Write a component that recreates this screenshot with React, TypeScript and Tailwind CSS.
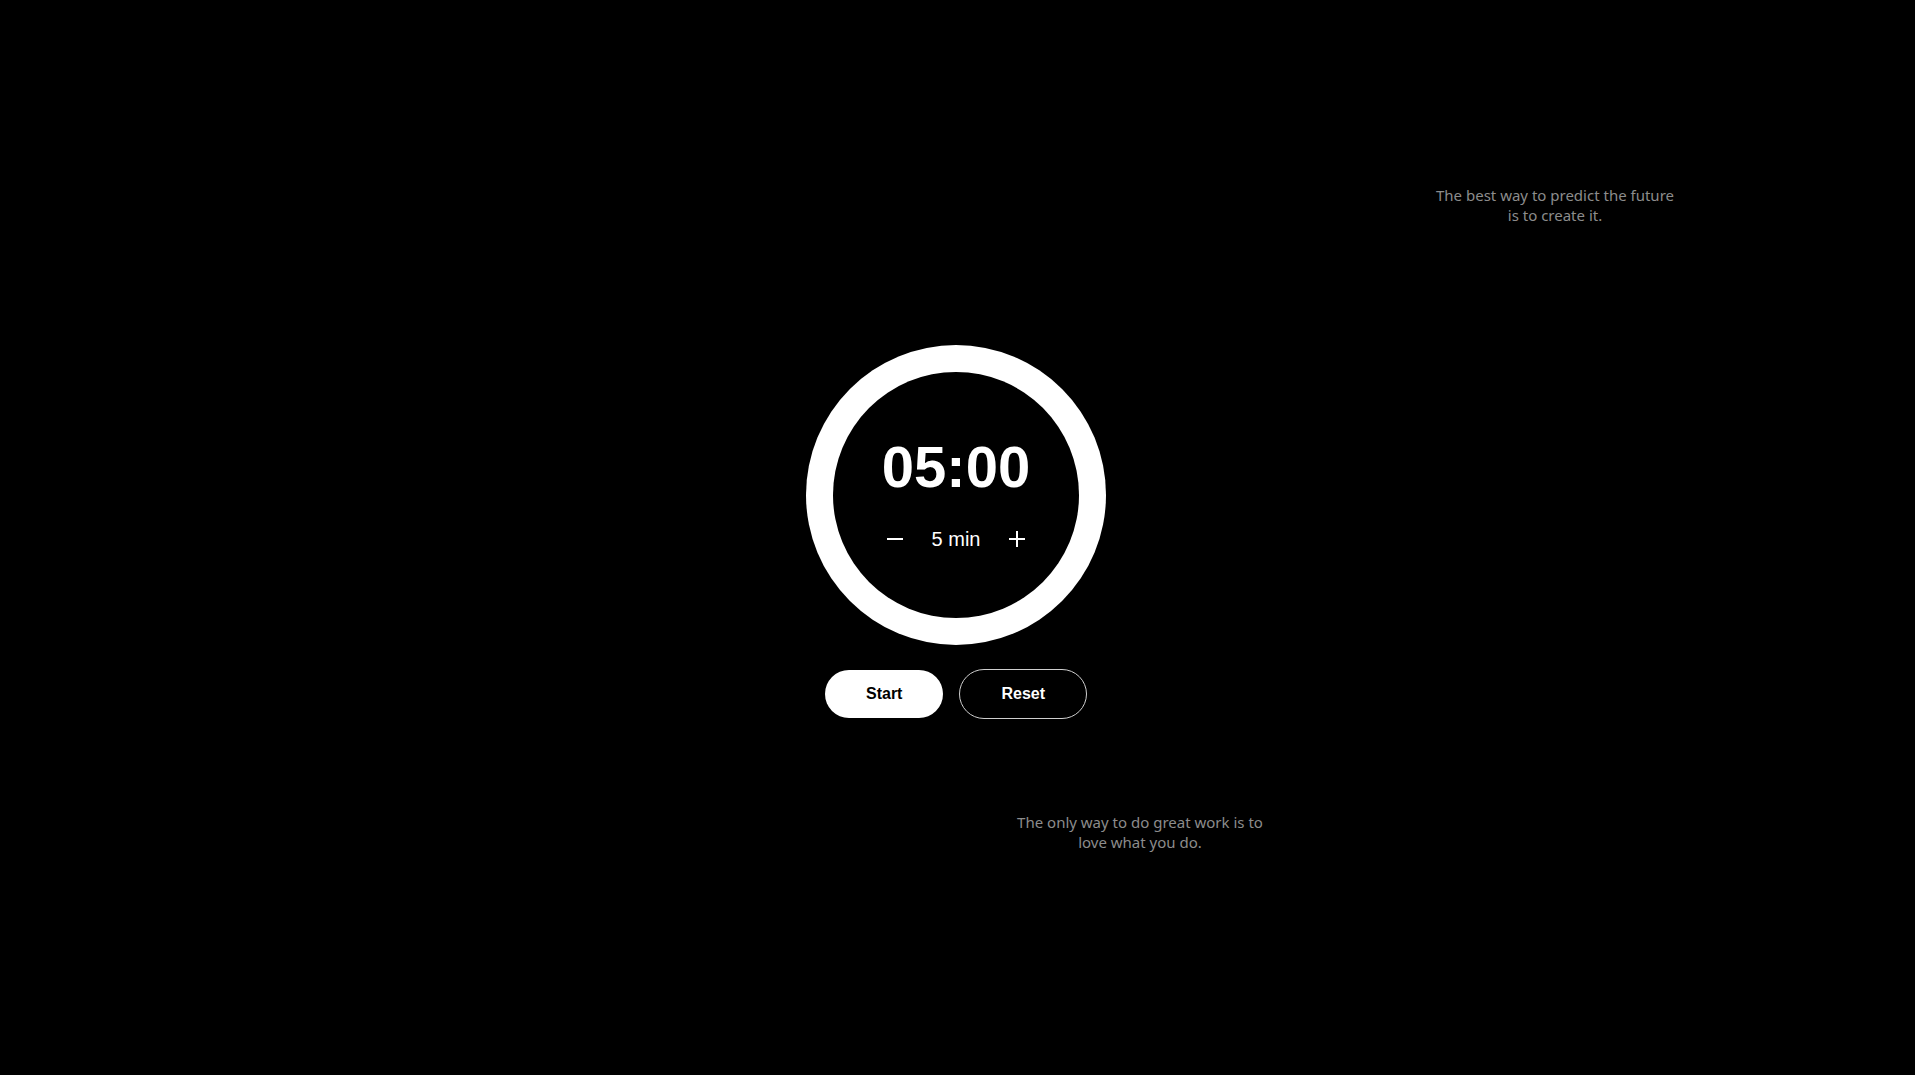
import React from "react";

function MinusIcon() {
  return (
    <svg width="24" height="24" viewBox="0 0 24 24" fill="none" stroke="white" strokeWidth="2" strokeLinecap="square">
      <path d="M5 12h14" />
    </svg>
  );
}

function PlusIcon() {
  return (
    <svg width="24" height="24" viewBox="0 0 24 24" fill="none" stroke="white" strokeWidth="2" strokeLinecap="square">
      <path d="M5 12h14" />
      <path d="M12 5v14" />
    </svg>
  );
}

export default function App() {
  return (
    <div className="relative w-full h-[1075px] bg-black overflow-hidden" style={{ fontFamily: '"Liberation Sans", Arial, sans-serif' }}>
      <div className="flex flex-col items-center pt-[345px] pr-[3px]">
        <div className="w-[300px] h-[300px] rounded-full bg-white flex items-center justify-center">
          <div className="w-[246px] h-[246px] rounded-full bg-black flex flex-col items-center justify-center">
            <div className="text-white font-bold text-[58px] leading-none">05:00</div>
            <div className="mt-[29px] flex items-center h-[28px]">
              <button className="w-[24px] h-[24px] flex items-center justify-center"><MinusIcon /></button>
              <span className="mx-[25px] text-white text-[20px] leading-[28px]">5 min</span>
              <button className="w-[24px] h-[24px] flex items-center justify-center"><PlusIcon /></button>
            </div>
          </div>
        </div>
        <div className="mt-[24px] flex items-center gap-4">
          <button className="bg-white text-black font-bold text-[16px] leading-6 px-[41px] py-3 rounded-full">Start</button>
          <button className="bg-black text-white font-bold text-[16px] leading-6 px-[41px] py-3 rounded-full border border-[#cfcfcf]">Reset</button>
        </div>
      </div>
      <div
        className="absolute left-[1395px] top-[185px] w-[320px] text-center text-[#8c8c8c] text-[15px] leading-[20px]"
        style={{ fontFamily: '"Noto Sans", "Open Sans", sans-serif' }}
      >
        The best way to predict the future<br />is to create it.
      </div>
      <div
        className="absolute left-[980px] top-[812px] w-[320px] text-center text-[#8c8c8c] text-[15px] leading-[20px]"
        style={{ fontFamily: '"Noto Sans", "Open Sans", sans-serif' }}
      >
        The only way to do great work is to<br />love what you do.
      </div>
    </div>
  );
}
